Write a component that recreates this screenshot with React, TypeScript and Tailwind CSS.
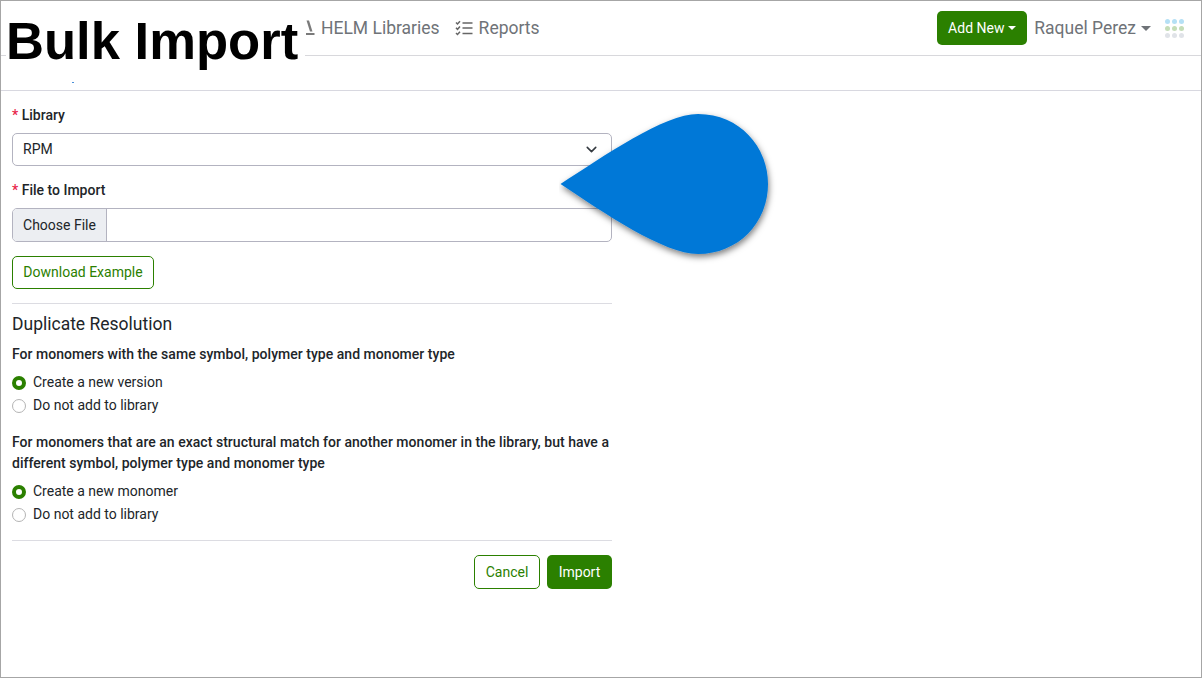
import { ChevronDown } from 'lucide-react';

function Radio({ checked, label }: { checked?: boolean; label: string }) {
  return (
    <label className="flex h-[23px] items-center gap-[7px] text-[14px] text-[#212529]">
      {checked ? (
        <span className="box-border h-[14px] w-[14px] rounded-full border-[4px] border-[#2b8000] bg-white" />
      ) : (
        <span className="box-border h-[14px] w-[14px] rounded-full border border-[#b4b4b4] bg-white" />
      )}
      {label}
    </label>
  );
}

function FieldLabel({ text }: { text: string }) {
  return (
    <div className="text-[14px] leading-[21px] font-medium text-[#212529]">
      <span className="text-[#e8254a]">*</span> {text}
    </div>
  );
}

function TopNav() {
  return (
    <nav className="flex h-[55px] items-center border-b border-[#d8d8dc] pr-[17px] pl-[304px] text-[17.5px] text-[#6f7378]">
      <span className="flex items-center gap-[6px]">
        <svg width="10" height="18" viewBox="0 0 10 18" className="text-[#7a7a7a]">
          <path d="M1.5 1.5 L4 1.5 L7.5 12.5 L5 12.5 Z" fill="currentColor" />
          <rect x="1" y="14" width="8.5" height="2" fill="currentColor" />
        </svg>
        HELM Libraries
      </span>
      <span className="ml-[15px] flex items-center gap-[6px]">
        <svg width="18" height="16" viewBox="0 0 18 16" fill="none" stroke="#666" strokeWidth="1.5">
          <path d="M1 2.5 L2.5 4 L5 1.2 M1 7.8 L2.5 9.3 L5 6.5 M1 13 L2.5 14.5 L5 11.7" />
          <path d="M7.5 3 H17.5 M7.5 8 H17.5 M7.5 13.5 H17.5" strokeWidth="1.7" />
        </svg>
        Reports
      </span>
      <button
        type="button"
        className="ml-auto flex h-[34px] w-[90px] items-center justify-center gap-[4px] rounded-[5px] bg-[#2b8000] text-[14px] text-white"
      >
        Add New
        <span className="inline-block border-x-[4px] border-t-[4px] border-x-transparent border-t-white" />
      </button>
      <span className="ml-[8px] flex items-center gap-[5px]">
        <span className="-ml-px">Raquel Perez</span>
        <span className="inline-block border-x-[5px] border-t-[5px] border-x-transparent border-t-[#6f7378]" />
      </span>
      <div className="ml-[14px] grid grid-cols-3 gap-x-[2px] gap-y-[2px]">
        {['#b5e0f5', '#b5e0f5', '#b5e0f5', '#c5ddb8', '#c5ddb8', '#c5ddb8', '#e0e3e8', '#e0e3e8', '#e0e3e8'].map((color, i) => (
          <span key={i} className="h-[5px] w-[5px] rounded-full" style={{ backgroundColor: color }} />
        ))}
      </div>
    </nav>
  );
}

export default function App() {
  return (
    <div className="relative box-border h-[678px] w-[1202px] overflow-hidden border border-[#a6a6a6] bg-white font-['Roboto',sans-serif]">
      <TopNav />
      <div className="h-[35px] border-b border-[#d8d8e0]" />

      <main className="w-[611px] pt-[14px] pl-[11px]">
        <FieldLabel text="Library" />
        <div className="mt-[7px] flex h-[33px] items-center justify-between rounded-[5px] border border-[#b3b3c0] pr-[11px] pl-[10px] text-[14px] text-[#212529]">
          RPM
          <ChevronDown size={17} strokeWidth={2.2} className="text-[#343a40]" />
        </div>

        <div className="mt-[14px]">
          <FieldLabel text="File to Import" />
        </div>
        <div className="mt-[7px] flex h-[34px] items-stretch overflow-hidden rounded-[5px] border border-[#b3b3c0] text-[14px] text-[#212529]">
          <span className="flex w-[94px] items-center justify-center border-r border-[#b3b3c0] bg-[#eceef2]">Choose File</span>
        </div>

        <button
          type="button"
          className="mt-[14px] flex h-[33px] w-[142px] items-center justify-center rounded-[5px] border border-[#2b8000] text-[14px] text-[#2b8000]"
        >
          Download Example
        </button>

        <hr className="mt-[14px] border-[#dcdce2]" />

        <h2 className="mt-[9px] text-[17.5px] leading-[22px] text-[#212529]">Duplicate Resolution</h2>

        <p className="mt-[9px] text-[14px] leading-[21px] font-medium tracking-[0.03px] text-[#212529]">
          For monomers with the same symbol, polymer type and monomer type
        </p>
        <div className="mt-[6px]">
          <Radio checked label="Create a new version" />
          <Radio label="Do not add to library" />
        </div>

        <p className="mt-[15px] text-[14px] leading-[21px] font-medium tracking-[0.03px] text-[#212529]">
          For monomers that are an exact structural match for another monomer in the library, but have a different symbol,
          polymer type and monomer type
        </p>
        <div className="mt-[6px]">
          <Radio checked label="Create a new monomer" />
          <Radio label="Do not add to library" />
        </div>

        <hr className="mt-[14px] border-[#dcdce2]" />

        <div className="mt-[14px] flex justify-end gap-[7px]">
          <button
            type="button"
            className="h-[34px] w-[66px] rounded-[5px] border border-[#2b8000] text-[14px] text-[#2b8000]"
          >
            Cancel
          </button>
          <button type="button" className="h-[34px] w-[65px] rounded-[5px] bg-[#2b8000] text-[14px] text-white">
            Import
          </button>
        </div>
      </main>

      {/* callout title over the nav */}
      <div className="absolute top-[9px] left-[5px] h-[68px] w-[299px] bg-white font-['Liberation_Sans',sans-serif] text-[52.6px] leading-[62px] font-bold whitespace-nowrap text-black">
        Bulk Import
      </div>
      <span className="absolute top-[81px] left-[71px] h-px w-[2px] bg-[#4a90d9]" />

      {/* teardrop callout */}
      <svg width="220" height="155" viewBox="0 0 220 155" className="absolute top-[110px] left-[558px]">
        <defs>
          <filter id="dropShadow" x="-10%" y="-10%" width="125%" height="125%">
            <feDropShadow dx="1" dy="3" stdDeviation="3" floodColor="#000" floodOpacity="0.5" />
          </filter>
        </defs>
        <path
          d="M1.5 73 C45 45 105 3 139 3 C181 3 209 36 209 73 C209 112 179 143 139 143 C105 143 45 102 1.5 73 Z"
          fill="#0078d7"
          filter="url(#dropShadow)"
        />
      </svg>
    </div>
  );
}
